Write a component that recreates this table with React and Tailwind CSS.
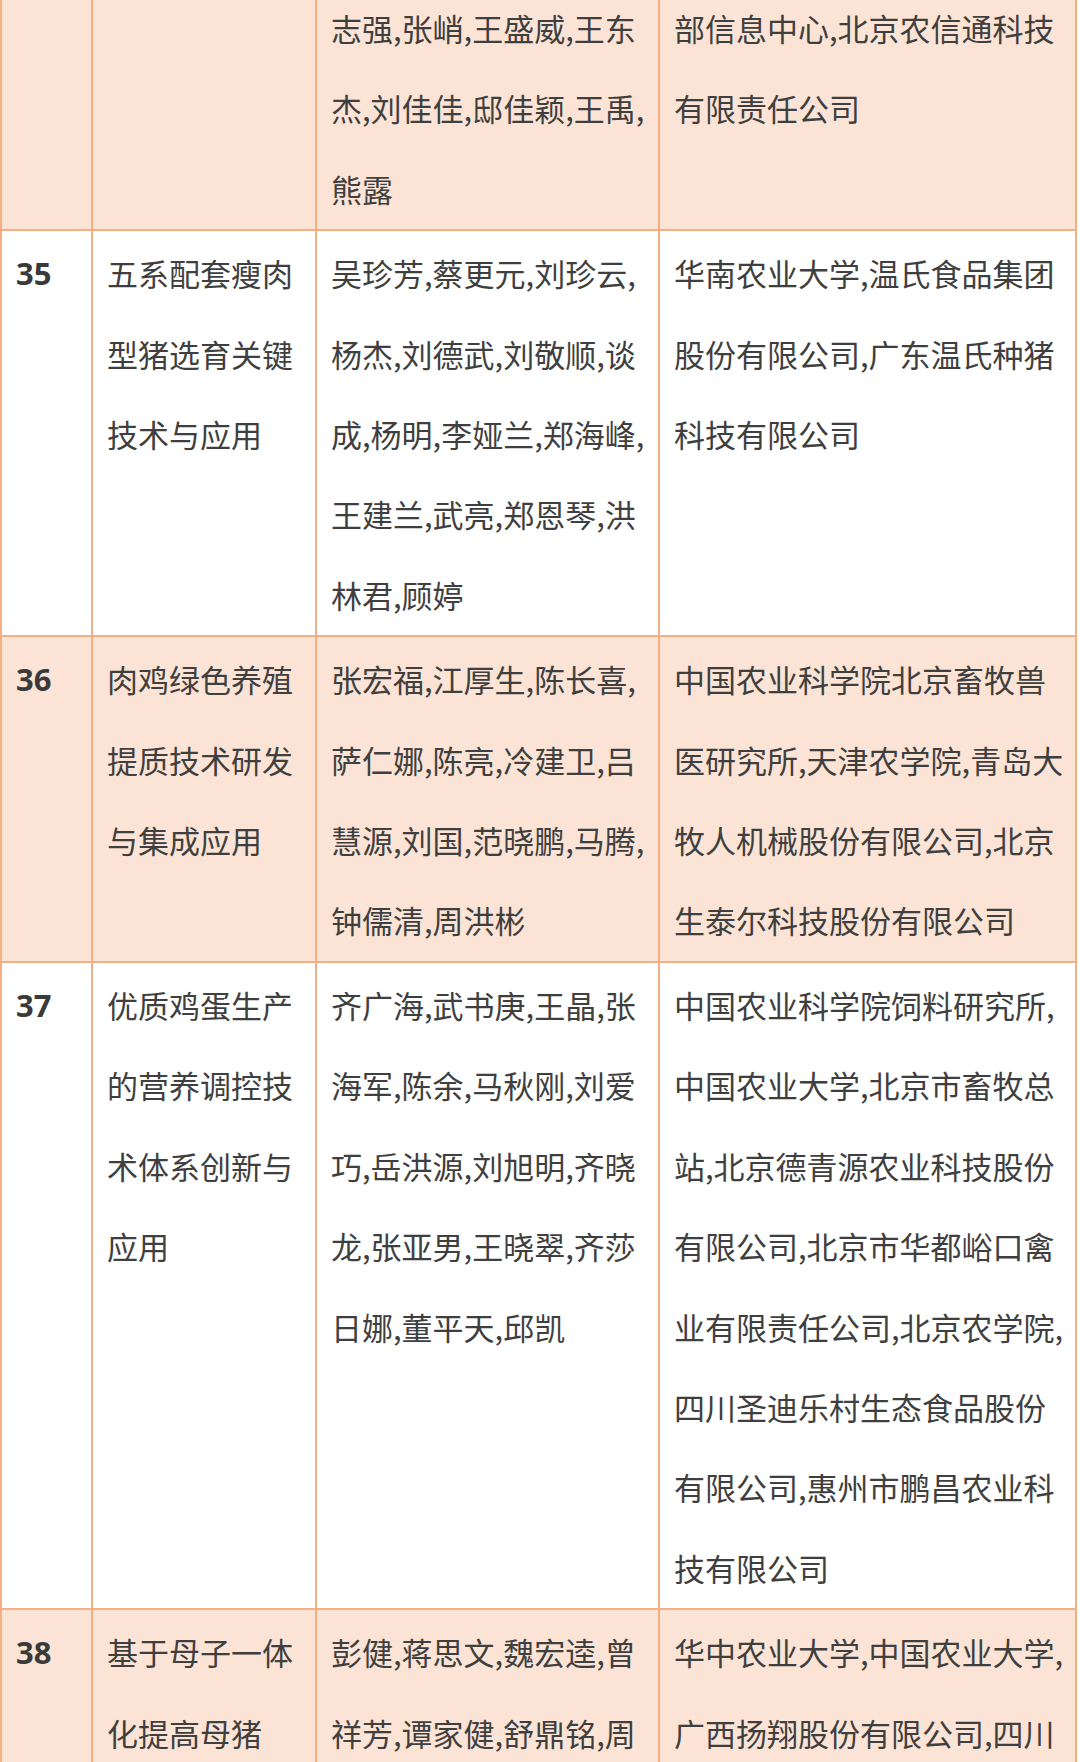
import React from 'react';

// rows of the award table, lines kept exactly as they break in the layout
const rows = [
  {
    no: '',
    tint: true,
    title: [],
    people: ['志强,张峭,王盛威,王东', '杰,刘佳佳,邸佳颖,王禹,', '熊露'],
    units: ['部信息中心,北京农信通科技', '有限责任公司'],
  },
  {
    no: '35',
    tint: false,
    title: ['五系配套瘦肉', '型猪选育关键', '技术与应用'],
    people: ['吴珍芳,蔡更元,刘珍云,', '杨杰,刘德武,刘敬顺,谈', '成,杨明,李娅兰,郑海峰,', '王建兰,武亮,郑恩琴,洪', '林君,顾婷'],
    units: ['华南农业大学,温氏食品集团', '股份有限公司,广东温氏种猪', '科技有限公司'],
  },
  {
    no: '36',
    tint: true,
    title: ['肉鸡绿色养殖', '提质技术研发', '与集成应用'],
    people: ['张宏福,江厚生,陈长喜,', '萨仁娜,陈亮,冷建卫,吕', '慧源,刘国,范晓鹏,马腾,', '钟儒清,周洪彬'],
    units: ['中国农业科学院北京畜牧兽', '医研究所,天津农学院,青岛大', '牧人机械股份有限公司,北京', '生泰尔科技股份有限公司'],
  },
  {
    no: '37',
    tint: false,
    title: ['优质鸡蛋生产', '的营养调控技', '术体系创新与', '应用'],
    people: ['齐广海,武书庚,王晶,张', '海军,陈余,马秋刚,刘爱', '巧,岳洪源,刘旭明,齐晓', '龙,张亚男,王晓翠,齐莎', '日娜,董平天,邱凯'],
    units: [
      '中国农业科学院饲料研究所,',
      '中国农业大学,北京市畜牧总',
      '站,北京德青源农业科技股份',
      '有限公司,北京市华都峪口禽',
      '业有限责任公司,北京农学院,',
      '四川圣迪乐村生态食品股份',
      '有限公司,惠州市鹏昌农业科',
      '技有限公司',
    ],
  },
  {
    no: '38',
    tint: true,
    title: ['基于母子一体', '化提高母猪'],
    people: ['彭健,蒋思文,魏宏逵,曾', '祥芳,谭家健,舒鼎铭,周'],
    units: ['华中农业大学,中国农业大学,', '广西扬翔股份有限公司,四川'],
  },
];

function Cell({ lines, tint }) {
  return (
    <div
      className={
        'px-[14px] pt-[2px] text-[31px] leading-[80.4px] text-[#3f3f3f] ' +
        (tint ? 'bg-[#fbe4d5]' : 'bg-white')
      }
      style={{ fontFamily: '"Noto Sans CJK SC", "Noto Sans", sans-serif' }}
    >
      {lines.map((line, i) => (
        <div key={i} className="whitespace-nowrap">
          {line}
        </div>
      ))}
    </div>
  );
}

export default function App() {
  return (
    <div className="h-[1762px] w-[1080px] overflow-hidden bg-white">
      <div className="-mt-[16px] grid w-[1077px] grid-cols-[89px_222px_341px_415px] gap-[2px] bg-[#f4b083] p-[2px]">
        {rows.map((row, i) => (
          <React.Fragment key={i}>
            <div
              className={
                'px-[14px] pt-[2px] text-[31px] font-bold leading-[80.4px] text-[#3a3a3a] ' +
                (row.tint ? 'bg-[#fbe4d5]' : 'bg-white')
              }
              style={{ fontFamily: '"Noto Sans", "Noto Sans CJK SC", sans-serif' }}
            >
              {row.no}
            </div>
            <Cell lines={row.title} tint={row.tint} />
            <Cell lines={row.people} tint={row.tint} />
            <Cell lines={row.units} tint={row.tint} />
          </React.Fragment>
        ))}
      </div>
    </div>
  );
}
